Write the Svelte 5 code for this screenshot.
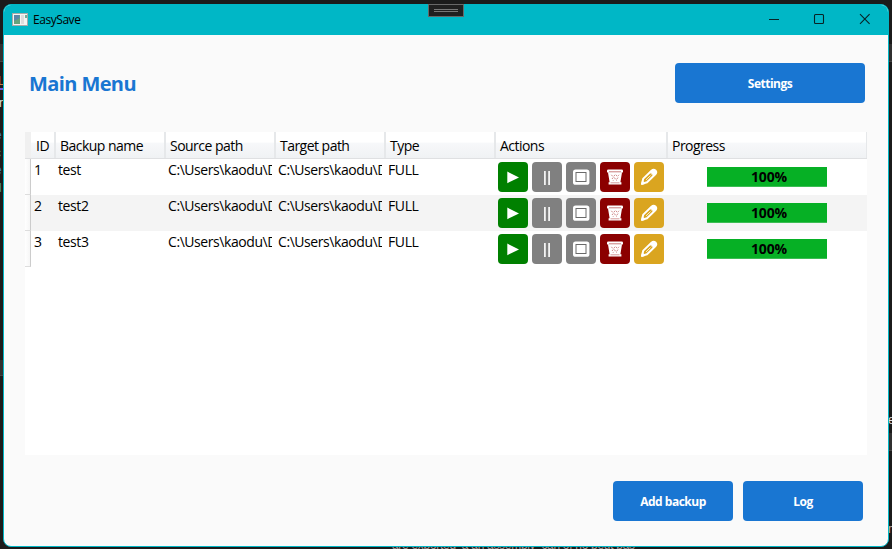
<script>
  const columns = [
    { label: 'ID', width: 24 },
    { label: 'Backup name', width: 110 },
    { label: 'Source path', width: 110 },
    { label: 'Target path', width: 110 },
    { label: 'Type', width: 110 },
    { label: 'Actions', width: 172 },
    { label: 'Progress', width: 200 }
  ];
  const path = 'C:\\Users\\kaodu\\D';
  const rows = [
    { id: 1, name: 'test', type: 'FULL', progress: 100 },
    { id: 2, name: 'test2', type: 'FULL', progress: 100 },
    { id: 3, name: 'test3', type: 'FULL', progress: 100 }
  ];
</script>

<div class="desktop">
  <i class="strip" style="top:44px;height:18px"></i>
  <i class="strip" style="top:360px;height:16px"></i>
  <i class="strip right" style="top:44px;height:18px"></i>
  <i class="strip right" style="top:433px;height:18px"></i>
  <span class="code" style="left:-2px;top:73px;color:#c97b45">L</span>
  <i class="mark"></i>
  <span class="code" style="left:-1px;top:95px;color:#ddd">r</span>
  <span class="code" style="left:-5px;top:127px;color:#3b78b8">e</span>
  <span class="code" style="left:-5px;top:145px;color:#4b8f82">c</span>
  <span class="code" style="left:-5px;top:162px;color:#3b78b8">e</span>
  <span class="code" style="left:-5px;top:180px;color:#4b8f82">d</span>
  <span class="code" style="left:888px;top:412px;color:#ddd">e</span>
  <span class="code" style="left:888px;top:521px;color:#c9b8a8">m</span>
  <span class="code" style="left:392px;top:537px;color:#a99;letter-spacing:-.3px">are exported  a an assembly  can of no peut pas</span>

  <main class="window">
    <header class="titlebar">
      <svg class="app" width="16" height="13" viewBox="0 0 16 13">
        <rect x=".5" y=".5" width="15" height="12" fill="#f4f4f2" stroke="#a9a9a9" />
        <rect x="2" y="2" width="6" height="9" fill="#5c9797" />
        <path d="M2 2h5v4l-5 3z" fill="#5b86a9" />
        <path d="M2 11V8l6-3v6z" fill="#66a37d" />
        <rect x="9" y="2" width="3" height="9" fill="#ddd" />
        <rect x="13" y="2" width="2" height="3" fill="#6fae9a" />
      </svg>
      <span class="apptitle">EasySave</span>
      <svg class="controls" width="102" height="12" viewBox="0 0 102 12" fill="none" stroke="#082326" stroke-width="1.1">
        <path d="M0 6.5h10" />
        <rect x="45.5" y="1.5" width="9" height="9" rx="1" />
        <path d="M91 1.2l9.6 9.6M100.6 1.2L91 10.8" />
      </svg>
    </header>

    <section class="body">
      <div class="top">
        <h1>Main Menu</h1>
        <button class="primary settings">Settings</button>
      </div>

      <div class="grid">
        <div class="head">
          <div class="corner"></div>
          {#each columns as c}
            <div class="th" style="width:{c.width}px"><span>{c.label}</span></div>
          {/each}
        </div>
        {#each rows as r}
          <div class="row">
            <div class="rowhead"></div>
            <div class="td id">{r.id}</div>
            <div class="td">{r.name}</div>
            <div class="td path"><span>{path}</span></div>
            <div class="td path"><span>{path}</span></div>
            <div class="td type">{r.type}</div>
            <div class="actions">
              <button class="act play" aria-label="Run">
                <svg viewBox="0 0 30 30"><path d="M9.3 9.6v11.6L21 15.4z" fill="#fff" /></svg>
              </button>
              <button class="act" aria-label="Pause">
                <svg viewBox="0 0 30 30"><path d="M12 9h1.8v14H12zM16.2 9H18v14h-1.8z" fill="#f2f2f2" /></svg>
              </button>
              <button class="act" aria-label="Stop">
                <svg viewBox="0 0 30 30"><rect x="7" y="7.4" width="16.4" height="15.4" rx="2.6" fill="#fff" /><rect x="10" y="10.5" width="10" height="9" fill="#fff" stroke="#6a6a6a" stroke-width="1" /></svg>
              </button>
              <button class="act bin" aria-label="Delete">
                <svg viewBox="0 0 30 30">
                  <rect x="7" y="7.4" width="16" height="3.4" rx="1.3" fill="#fff" />
                  <path d="M8 10.5h14l-1.6 9.8h1v2.3H8.6v-2.3h1z" fill="#fff" />
                  <path d="M9 9.6h12M10.5 20.8h9" stroke="#c98080" stroke-width=".8" />
                  <path d="M11.4 12.8l1.2 1.5M15 12.8l-1.2 1.5M16 12.8l1.2 1.5M19 12.8l-.8 1M12 17l1.2-1.5M14.3 15.5l1.2 1.7M18 15.5l-1.2 1.7M13 18.7l.8-.8M17 18.7l-.8-.8" stroke="#c06868" stroke-width=".8" />
                </svg>
              </button>
              <button class="act edit" aria-label="Edit">
                <svg viewBox="0 0 30 30" fill="none" stroke="#fff" stroke-linejoin="round" stroke-linecap="round">
                  <path d="M8 21.8L9.3 16.6 17.5 8.8Q19.6 7 21.4 8.5Q23.1 10.3 21.3 12.3L13 20.3z" stroke-width="2" />
                  <path d="M16.2 10L18.4 7.9Q20 7.2 21.5 8.5Q22.8 10 22 11.5L19.8 13.7z" fill="#fff" stroke-width="1" />
                  <path d="M12.3 17.6l4-3.8" stroke-width=".8" />
                  <path d="M7.7 22.1l.8-3 2.2 2.1z" fill="#fff" stroke-width="1" />
                </svg>
              </button>
            </div>
            <div class="progress">
              <div class="bar"><div class="fill" style="width:{r.progress}%"></div><b>{r.progress}%</b></div>
            </div>
          </div>
        {/each}
      </div>

      <footer>
        <button class="primary">Add backup</button>
        <button class="primary">Log</button>
      </footer>
    </section>
  </main>
  <div class="grip"><i></i><i></i></div>
</div>

<style>
  :global(body) { margin: 0; overflow: hidden; }
  * { box-sizing: border-box; }
  .desktop {
    position: relative; width: 892px; height: 549px; overflow: hidden;
    padding: 4px 3px 2px; background: #1b1b1b;
    font-family: "Open Sans", "Noto Sans", sans-serif; color: #000;
  }
  .strip { position: absolute; left: 0; width: 3px; background: #303030; border-bottom: 1px solid #444; }
  .strip.right { left: 889px; }
  .mark { position: absolute; left: 0; top: 88px; width: 3px; height: 2px; background: #7058dc; }
  .code { position: absolute; font: 12px/16px "Liberation Sans", sans-serif; white-space: pre; }
  .window {
    position: relative; width: 886px; height: 543px; overflow: hidden;
    display: flex; flex-direction: column;
    background: #fafafa; border: 1px solid #00b7c6; border-radius: 8px;
  }
  .titlebar {
    height: 30px; flex: none; display: flex; align-items: center;
    background: #00b7c6; padding: 0 17px 0 8px;
  }
  .app { display: block; position: relative; top: -1px; }
  .apptitle { margin-left: 5px; font-size: 12px; letter-spacing: -0.45px; line-height: 16px; }
  .controls { margin-left: auto; position: relative; top: -1px; }
  .grip {
    position: absolute; left: 428px; top: 4px; width: 36px; height: 13px;
    background: #202020; border: 1px solid #686868;
    display: flex; flex-direction: column; align-items: center; padding-top: 4px; gap: 1px;
  }
  .grip i { width: 24px; height: 1px; background: #777; }
  .body { flex: 1; padding: 28px 21px 25px; display: flex; flex-direction: column; }
  .top { display: flex; justify-content: space-between; align-items: center; padding: 0 2px 0 4px; height: 40px; }
  h1 { margin: 0; padding-top: 2px; font-size: 20px; line-height: 40px; font-weight: 700; color: #1976d2; letter-spacing: -0.6px; }
  button { border: 0; padding: 0; font-family: inherit; }
  .primary {
    width: 120px; height: 40px; border-radius: 4px; background: #1976d2; color: #fff;
    font-size: 12px; font-weight: 700; letter-spacing: -0.5px; padding-top: 1px;
  }
  .settings { width: 190px; }
  .grid { margin-top: 29px; width: 842px; height: 323px; background: #fff; font-size: 14px; letter-spacing: -0.4px; }
  .head {
    display: flex; height: 27px; border-bottom: 1px solid #dfe0e2; letter-spacing: -0.53px;
    background: linear-gradient(#fff 0, #fff 40%, #f7f8fa 41%, #f0f2f4 100%);
  }
  .corner { width: 6px; background: #f0f0f0; }
  .th { border-right: 1px solid #e6e8ea; box-shadow: 1px 0 #e6e8ea; padding-left: 5px; line-height: 28px; height: 26px; white-space: nowrap; }
  .th:last-child { box-shadow: none; }
  .row { display: flex; height: 36px; background: #fff; }
  .row:nth-child(odd) { background: #f4f4f4; }
  .rowhead { width: 6px; background: linear-gradient(90deg, #fff, #f6f6f6); border-right: 1px solid #ccc; border-bottom: 1px solid #ddd; }
  .td { width: 110px; padding: 1px 3px 0; line-height: 19px; white-space: nowrap; }
  .id { width: 24px; }
  .path span { display: block; overflow: hidden; width: 104px; letter-spacing: -0.43px; }
  .actions { width: 172px; padding: 3px; display: flex; gap: 4px; }
  .act { width: 30px; height: 30px; border-radius: 4px; background: #808080; }
  .act svg { display: block; width: 30px; height: 30px; }
  .play { background: #008000; }
  .bin { background: #8b0000; }
  .edit { background: #daa520; }
  .progress { width: 200px; display: flex; align-items: center; justify-content: center; }
  .bar { display: grid; width: 120px; height: 20px; background: #e6e6e6; }
  .fill { grid-area: 1 / 1; height: 20px; background: #06b025; border-bottom: 1px solid #3bbd53; }
  .bar b { grid-area: 1 / 1; text-align: center; line-height: 20px; font-weight: 700; letter-spacing: -0.1px; padding-left: 4px; }
  footer { margin-top: auto; display: flex; justify-content: flex-end; gap: 10px; padding-right: 4px; }
</style>
